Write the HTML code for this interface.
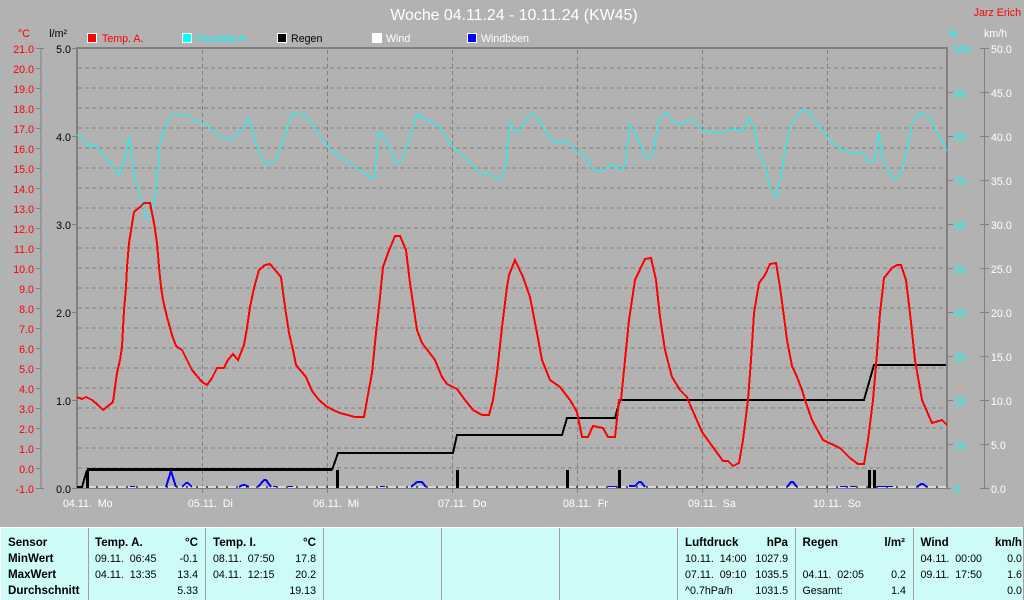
<!DOCTYPE html>
<html><head><meta charset="utf-8"><title>Woche</title>
<style>
html,body{margin:0;padding:0;background:#b2b2b2;}
svg{display:block;font-family:"Liberation Sans",sans-serif;font-size:10.67px;}
text{white-space:pre}
.r{fill:#f00;text-anchor:end}.k{fill:#000;text-anchor:end}.c{fill:#0ff}.w{fill:#fff}
.b{font-weight:bold;font-size:11.6px;fill:#000}.t{fill:#000}.e{text-anchor:end}
</style></head><body>
<svg width="1024" height="600" viewBox="0 0 1024 600" xmlns="http://www.w3.org/2000/svg">
<rect width="1024" height="600" fill="#b2b2b2"/>
<g shape-rendering="crispEdges">
<g stroke="#808080" stroke-width="1" stroke-dasharray="4 3" fill="none">
<path d="M78 68H946M78 88H946M78 108H946M78 128H946M78 148H946M78 168H946M78 188H946M78 208H946M78 228H946M78 248H946M78 268H946M78 288H946M78 308H946M78 328H946M78 348H946M78 368H946M78 388H946M78 408H946M78 428H946M78 448H946M78 468H946"/>
<path d="M202.5 50V488M327.5 50V488M452.5 50V488M577.5 50V488M702.5 50V488M827.5 50V488"/>
</g>
<g fill="#808080">
<rect x="76" y="47" width="872" height="2"/>
<rect x="76" y="47" width="2" height="442"/>
<rect x="946" y="47" width="2" height="442"/>
<rect x="72" y="488" width="879" height="1"/>
<rect x="40.5" y="48" width="1" height="440"/>
<rect x="984" y="48" width="1" height="440"/>
<path d="M36 48h8v1h-8zM36 68h5v1h-5zM36 88h5v1h-5zM36 108h5v1h-5zM36 128h5v1h-5zM36 148h5v1h-5zM36 168h5v1h-5zM36 188h5v1h-5zM36 208h5v1h-5zM36 228h5v1h-5zM36 248h5v1h-5zM36 268h5v1h-5zM36 288h5v1h-5zM36 308h5v1h-5zM36 328h5v1h-5zM36 348h5v1h-5zM36 368h5v1h-5zM36 388h5v1h-5zM36 408h5v1h-5zM36 428h5v1h-5zM36 448h5v1h-5zM36 468h5v1h-5zM36 488h8v1h-8z"/>
<path d="M72 48h5v1h-5zM72 136h5v1h-5zM72 224h5v1h-5zM72 312h5v1h-5zM72 400h5v1h-5z"/>
<path d="M948 92h5v1h-5zM948 136h5v1h-5zM948 180h5v1h-5zM948 224h5v1h-5zM948 268h5v1h-5zM948 312h5v1h-5zM948 356h5v1h-5zM948 400h5v1h-5zM948 444h5v1h-5z"/>
<path d="M980 48h9v1h-9zM980 92h9v1h-9zM980 136h9v1h-9zM980 180h9v1h-9zM980 224h9v1h-9zM980 268h9v1h-9zM980 312h9v1h-9zM980 356h9v1h-9zM980 400h9v1h-9zM980 444h9v1h-9zM980 488h9v1h-9z"/>
<path d="M202 489h1v4h-1zM327 489h1v4h-1zM452 489h1v4h-1zM577 489h1v4h-1zM702 489h1v4h-1zM827 489h1v4h-1z"/>
</g>
<path d="M86 487H946" stroke="#fff" stroke-width="1"/>
<path d="M86 487H946" stroke="#000" stroke-width="1" stroke-dasharray="2 8"/>
<g fill="none" stroke="#00f" stroke-width="1">
<path d="M130 486.5H135M380 486.5H385M273 486.5H277M288 486.5H293M608 486.5H617M840 486.5H847M850 486.5H856M877 486.5H893"/>
</g>
<g fill="none" stroke="#00f" stroke-width="2">
<path d="M166 487L171 471L176 487M182 487L186 483L188 483L192 487M239 487L243 485L245 485L249 487M258 487L264 480L266 480L271 487"/>
<path d="M411 487L417 482L422 482L426 487M629 486H635L639 482H641L645 487M787 487L791 482H793L797 487M917 487L921 484H923L927 487"/>
</g>
<polyline fill="none" stroke="#0ff" stroke-width="1" points="77,135 83,137 87,146 93,144 100,150 107,160 115,168 119,176 125,157 129,137 132,157 135,180 142,200 146,218 150,217 155,200 160,143 167,122 173,115 187,114 198,123 207,124 218,136 225,137 233,141 238,132 243,129 249,118 258,150 266,165 275,161 280,150 292,113 307,116 318,133 328,147 340,157 350,164 363,172 374,179 379,132 385,138 396,163 402,160 407,147 417,114 440,127 453,148 465,157 478,172 487,173 500,180 505,170 510,122 516,132 520,130 530,114 537,116 550,139 557,143 567,141 577,152 583,153 593,170 602,171 613,164 620,170 625,165 630,125 635,132 646,158 652,157 655,143 660,117 667,113 675,123 680,124 692,119 702,130 720,133 733,129 743,131 749,117 754,128 759,153 765,165 770,187 776,198 780,180 787,140 792,122 802,110 807,110 827,137 843,151 864,154 869,163 875,160 879,133 882,157 888,172 895,179 901,173 907,150 912,123 920,112 930,118 947,151"/>
<g fill="#000">
<rect x="86" y="470" width="3" height="18"/><rect x="336" y="470" width="3" height="18"/><rect x="456" y="470" width="3" height="18"/><rect x="566" y="470" width="3" height="18"/><rect x="618" y="470" width="3" height="18"/><rect x="868" y="470" width="3" height="18"/><rect x="873" y="470" width="3" height="18"/>
</g>
<polyline fill="none" stroke="#000" stroke-width="2" points="77,487 82,487 87,470"/>
<path d="M87 469.5H332" fill="none" stroke="#000" stroke-width="3"/>
<polyline fill="none" stroke="#000" stroke-width="2" points="332,470 338,453 453,453 457,435 562,435 567,418 615,418 620,400 864,400 874,365 946,365"/>
<polyline fill="none" stroke="#f00" stroke-width="2" points="77,397 82,399 86,397 92,400 98,405 103,410 113,402 117,373 120,360 122,347 124,310 126,287 127,267 129,243 134,212 140,207 144,203 150,203 154,223 157,243 159,267 161,287 163,300 167,317 172,335 176,346 182,350 192,370 202,382 207,385 212,378 217,368 224,368 228,360 233,354 238,360 244,345 247,328 250,307 254,288 259,270 265,265 270,264 281,277 285,307 289,333 293,350 296,365 306,377 312,391 319,400 326,406 333,410 340,413 355,417 364,417 367,400 372,373 376,333 379,307 383,267 388,253 395,236 400,236 406,250 410,283 414,310 417,330 422,343 435,360 442,377 447,384 457,389 465,400 473,410 482,415 489,415 493,400 497,373 502,327 507,287 509,275 515,260 523,277 530,297 537,333 542,360 550,380 560,387 570,400 577,412 582,437 588,437 593,426 603,428 608,437 615,437 619,400 621,400 625,360 629,320 635,280 645,259 651,258 656,280 660,317 665,350 672,377 680,390 687,397 688,400 702,432 723,461 728,461 733,466 739,463 743,440 748,400 751,360 754,313 759,283 765,275 770,264 776,263 780,287 784,317 787,340 792,366 797,377 802,390 805,400 812,420 823,440 840,448 850,458 858,464 864,464 868,440 873,400 877,353 880,313 884,278 892,268 897,265 901,265 906,280 910,313 915,360 922,400 932,423 942,420 947,425"/>
<g stroke="#fff" stroke-width="1">
<rect x="87.5" y="33.5" width="9" height="9" fill="#f00"/>
<rect x="182.5" y="33.5" width="9" height="9" fill="#0ff"/>
<rect x="277.5" y="33.5" width="9" height="9" fill="#000"/>
<rect x="372.5" y="33.5" width="9" height="9" fill="#fff"/>
<rect x="467.5" y="33.5" width="9" height="9" fill="#00f"/>
</g>
<rect x="0" y="527" width="1024" height="73" fill="#ccfbf8"/>
<rect x="0" y="527" width="1023" height="1" fill="#fff"/>
<rect x="0" y="527" width="1" height="73" fill="#fff"/>
<g fill="#a0a0a0">
<rect x="88" y="528" width="1" height="72"/><rect x="205" y="528" width="1" height="72"/><rect x="323" y="528" width="1" height="72"/><rect x="441" y="528" width="1" height="72"/><rect x="559" y="528" width="1" height="72"/><rect x="677" y="528" width="1" height="72"/><rect x="795" y="528" width="1" height="72"/><rect x="913" y="528" width="1" height="72"/><rect x="1023" y="527" width="1" height="73"/>
</g>
</g>
<text x="514" y="20" text-anchor="middle" class="w" style="font-size:15.9px">Woche 04.11.24 - 10.11.24 (KW45)</text>
<text x="1021" y="16" text-anchor="end" style="fill:#f00">Jarz Erich</text>
<text x="102" y="42" style="fill:#f00">Temp. A.</text>
<text x="197" y="42" class="c">Feuchte A.</text>
<text x="291" y="42" style="fill:#000">Regen</text>
<text x="386" y="42" class="w">Wind</text>
<text x="481" y="42" class="w">Windböen</text>
<text x="30" y="37" class="r">°C</text>
<text x="67" y="37" class="k">l/m²</text>
<text x="948" y="37" class="c">%</text>
<text x="984" y="37" class="w">km/h</text>
<g class="axis">
<text x="34" y="53" class="r">21.0</text><text x="34" y="73" class="r">20.0</text><text x="34" y="93" class="r">19.0</text><text x="34" y="113" class="r">18.0</text><text x="34" y="133" class="r">17.0</text><text x="34" y="153" class="r">16.0</text><text x="34" y="173" class="r">15.0</text><text x="34" y="193" class="r">14.0</text><text x="34" y="213" class="r">13.0</text><text x="34" y="233" class="r">12.0</text><text x="34" y="253" class="r">11.0</text><text x="34" y="273" class="r">10.0</text><text x="34" y="293" class="r">9.0</text><text x="34" y="313" class="r">8.0</text><text x="34" y="333" class="r">7.0</text><text x="34" y="353" class="r">6.0</text><text x="34" y="373" class="r">5.0</text><text x="34" y="393" class="r">4.0</text><text x="34" y="413" class="r">3.0</text><text x="34" y="433" class="r">2.0</text><text x="34" y="453" class="r">1.0</text><text x="34" y="473" class="r">0.0</text><text x="34" y="493" class="r">-1.0</text>
<text x="71" y="53" class="k">5.0</text><text x="71" y="141" class="k">4.0</text><text x="71" y="229" class="k">3.0</text><text x="71" y="317" class="k">2.0</text><text x="71" y="405" class="k">1.0</text><text x="71" y="493" class="k">0.0</text>
<text x="953" y="53" class="c">100</text><text x="954" y="97" class="c">90</text><text x="954" y="141" class="c">80</text><text x="954" y="185" class="c">70</text><text x="954" y="229" class="c">60</text><text x="954" y="273" class="c">50</text><text x="954" y="317" class="c">40</text><text x="954" y="361" class="c">30</text><text x="954" y="405" class="c">20</text><text x="954" y="449" class="c">10</text><text x="954" y="493" class="c">0</text>
<text x="991" y="53" class="w">50.0</text><text x="991" y="97" class="w">45.0</text><text x="991" y="141" class="w">40.0</text><text x="991" y="185" class="w">35.0</text><text x="991" y="229" class="w">30.0</text><text x="991" y="273" class="w">25.0</text><text x="991" y="317" class="w">20.0</text><text x="991" y="361" class="w">15.0</text><text x="991" y="405" class="w">10.0</text><text x="991" y="449" class="w">5.0</text><text x="991" y="493" class="w">0.0</text>
</g>
<text x="63" y="507" class="w">04.11.  Mo</text><text x="188" y="507" class="w">05.11.  Di</text><text x="313" y="507" class="w">06.11.  Mi</text><text x="438" y="507" class="w">07.11.  Do</text><text x="563" y="507" class="w">08.11.  Fr</text><text x="688" y="507" class="w">09.11.  Sa</text><text x="813" y="507" class="w">10.11.  So</text>
<text x="8" y="546" class="b">Sensor</text><text x="8" y="562" class="b">MinWert</text><text x="8" y="578" class="b">MaxWert</text><text x="8" y="594" class="b">Durchschnitt</text>
<text x="95" y="546" class="b">Temp. A.</text><text x="198" y="546" class="b e">°C</text>
<text x="95" y="562" class="t">09.11.  06:45</text><text x="198" y="562" class="t e">-0.1</text>
<text x="95" y="578" class="t">04.11.  13:35</text><text x="198" y="578" class="t e">13.4</text>
<text x="198" y="594" class="t e">5.33</text>
<text x="213" y="546" class="b">Temp. I.</text><text x="316" y="546" class="b e">°C</text>
<text x="213" y="562" class="t">08.11.  07:50</text><text x="316" y="562" class="t e">17.8</text>
<text x="213" y="578" class="t">04.11.  12:15</text><text x="316" y="578" class="t e">20.2</text>
<text x="316" y="594" class="t e">19.13</text>
<text x="685" y="546" class="b">Luftdruck</text><text x="788" y="546" class="b e">hPa</text>
<text x="685" y="562" class="t">10.11.  14:00</text><text x="788" y="562" class="t e">1027.9</text>
<text x="685" y="578" class="t">07.11.  09:10</text><text x="788" y="578" class="t e">1035.5</text>
<text x="685" y="594" class="t">^0.7hPa/h</text><text x="788" y="594" class="t e">1031.5</text>
<text x="802.5" y="546" class="b">Regen</text><text x="905" y="546" class="b e">l/m²</text>
<text x="802.5" y="578" class="t">04.11.  02:05</text><text x="906" y="578" class="t e">0.2</text>
<text x="802.5" y="594" class="t">Gesamt:</text><text x="906" y="594" class="t e">1.4</text>
<text x="920.5" y="546" class="b">Wind</text><text x="1022" y="546" class="b e">km/h</text>
<text x="920.5" y="562" class="t">04.11.  00:00</text><text x="1022" y="562" class="t e">0.0</text>
<text x="920.5" y="578" class="t">09.11.  17:50</text><text x="1022" y="578" class="t e">1.6</text>
<text x="1022" y="594" class="t e">0.0</text>
</svg>
</body></html>
